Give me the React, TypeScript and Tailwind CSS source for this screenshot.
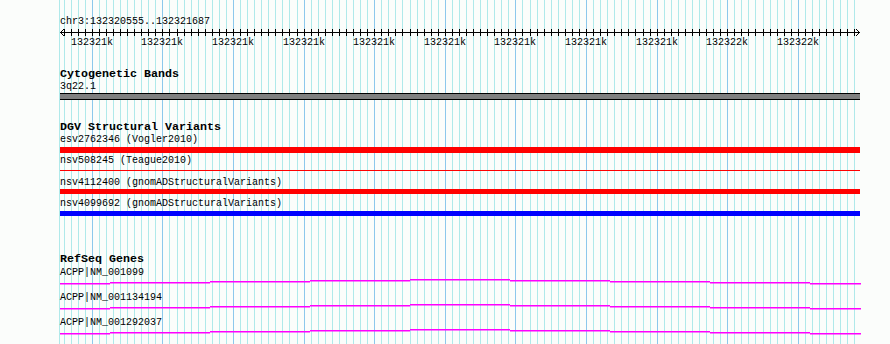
import React from 'react'

const START = 132320555
const END = 132321687
const WIDTH = 800
const LEFT = 60
const bpToX = (b: number) => LEFT + 0.5 + ((b - START) * WIDTH) / (END - START + 1)

const gridPositions: { b: number; x: number; major: boolean }[] = []
for (let b = Math.ceil(START / 10) * 10; b <= END; b += 10) {
  gridPositions.push({ b, x: Math.floor(bpToX(b)), major: b % 100 === 0 })
}

const mono = "font-['Liberation_Mono','DejaVu_Sans_Mono',monospace]"

// gene model steps (x relative to track left, y offset)
const geneSteps = [
  [0, 50, 0],
  [50, 150, -1],
  [150, 250, -2],
  [250, 350, -3],
  [350, 450, -4],
  [450, 550, -3],
  [550, 650, -2],
  [650, 750, -1],
  [750, 801, 0]
]

function Grid() {
  return (
    <svg className="absolute inset-0" width={890} height={344}>
      <rect x={59} y={0} width={1} height={344} fill="#afe9ea" />
      {gridPositions.map((g) => (
        <rect key={g.b} x={g.x} y={0} width={1} height={344} fill={g.major ? '#8cc8ec' : '#afe9ea'} />
      ))}
    </svg>
  )
}

function Ruler() {
  return (
    <svg width={890} height={20} className="-ml-[60px] block">
      <rect x={60} y={5} width={800} height={1} fill="#000" />
      {/* arrow heads */}
      <path d="M64 2 L60.5 5.5 L64 9" stroke="#000" fill="none" strokeWidth={1} />
      <path d="M856 2 L859.5 5.5 L856 9" stroke="#000" fill="none" strokeWidth={1} />
      {gridPositions.map((g) => (
        <rect key={g.b} x={g.x} y={2} width={1} height={7} fill="#000" />
      ))}
      {gridPositions
        .filter((g) => g.major)
        .map((g) => (
          <text
            key={'l' + g.b}
            x={g.x}
            y={18}
            textAnchor="middle"
            fontFamily="Liberation Mono, DejaVu Sans Mono, monospace"
            fontSize={10}
            fill="#000"
          >
            {Math.round(g.b / 1000)}k
          </text>
        ))}
    </svg>
  )
}

function GeneLine() {
  return (
    <svg width={WIDTH + 1} height={14} className="block">
      {geneSteps.map(([x1, x2, dy], i) => (
        <rect key={i} x={x1} y={5 + dy} width={x2 - x1} height={1.5} fill="#ff00ff" />
      ))}
    </svg>
  )
}

function Title({ children, className = '' }: { children: React.ReactNode; className?: string }) {
  return <div className={`${mono} text-[11.67px] leading-[13px] font-bold text-black ${className}`}>{children}</div>
}

function Label({ children, className = '' }: { children: React.ReactNode; className?: string }) {
  return <div className={`${mono} text-[10px] leading-[11px] text-black whitespace-pre ${className}`}>{children}</div>
}

export default function App() {
  return (
    <div className="relative w-[890px] h-[344px] overflow-hidden bg-[#fbfdfb]">
      <Grid />
      <div className="relative flex flex-col pl-[60px] w-[861px]">
        {/* location + ruler */}
        <div className={`${mono} mt-[16px] text-[10px] leading-[11px] text-black`}>chr3:132320555..132321687</div>
        <Ruler />

        {/* Cytogenetic bands */}
        <Title className="mt-[21px]">Cytogenetic Bands</Title>
        <Label>3q22.1</Label>
        <div className="mt-px h-[7px] w-[800px] border-y border-black bg-[#808080]" />

        {/* DGV */}
        <Title className="mt-[21px]">DGV Structural Variants</Title>
        <Label>esv2762346 (Vogler2010)</Label>
        <div className="mt-[2px] h-[6px] w-[800px] bg-[#ff0000]" />
        <Label className="mt-[2px]">nsv508245 (Teague2010)</Label>
        <div className="mt-[4px] h-px w-[800px] bg-[#ff0000]" />
        <Label className="mt-[6px]">nsv4112400 (gnomADStructuralVariants)</Label>
        <div className="mt-px h-[5px] w-[800px] bg-[#ff0000]" />
        <Label className="mt-[4px]">nsv4099692 (gnomADStructuralVariants)</Label>
        <div className="mt-[2px] h-[5px] w-[800px] bg-[#0000ff]" />

        {/* RefSeq */}
        <Title className="mt-[37px]">RefSeq Genes</Title>
        <Label className="mt-px">ACPP|NM_001099</Label>
        <GeneLine />
        <Label>ACPP|NM_001134194</Label>
        <GeneLine />
        <Label>ACPP|NM_001292037</Label>
        <GeneLine />
      </div>
    </div>
  )
}
